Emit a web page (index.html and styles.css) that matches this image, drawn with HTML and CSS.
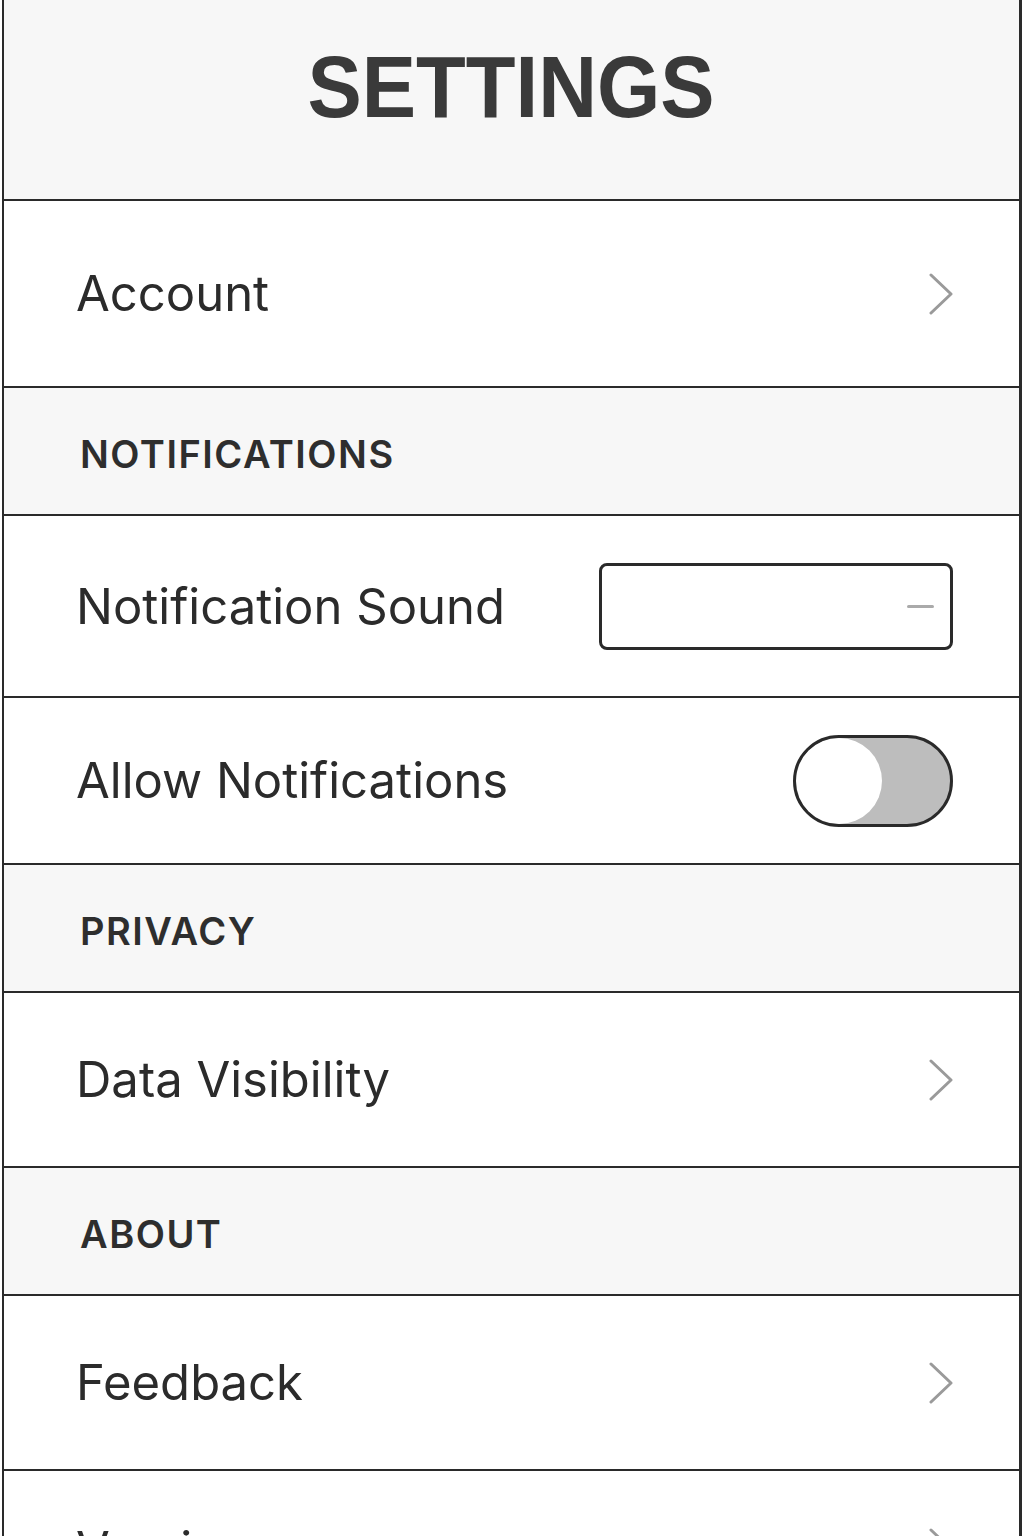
FILE: index.html
```html
<!DOCTYPE html>
<html lang="en">
<head>
<meta charset="utf-8">
<title>Settings</title>
<link rel="stylesheet" href="styles.css">
</head>
<body>
<div class="screen">
  <header class="title-bar"><h1 class="title">SETTINGS</h1></header>

  <div class="row row--185"><span class="label">Account</span>
    <svg class="chevron" viewBox="0 0 24 42"><path d="M2 2 L22 21 L2 40"/></svg>
  </div>

  <div class="section"><span class="section-label">NOTIFICATIONS</span></div>

  <div class="row row--180"><span class="label">Notification Sound</span>
    <div class="select"><span class="select-dash"></span></div>
  </div>

  <div class="row row--165"><span class="label">Allow Notifications</span>
    <div class="toggle"><span class="knob"></span></div>
  </div>

  <div class="section"><span class="section-label">PRIVACY</span></div>

  <div class="row row--173"><span class="label">Data Visibility</span>
    <svg class="chevron" viewBox="0 0 24 42"><path d="M2 2 L22 21 L2 40"/></svg>
  </div>

  <div class="section"><span class="section-label">ABOUT</span></div>

  <div class="row row--173"><span class="label">Feedback</span>
    <svg class="chevron" viewBox="0 0 24 42"><path d="M2 2 L22 21 L2 40"/></svg>
  </div>

  <div class="row row--156"><span class="label">Version</span>
    <svg class="chevron" viewBox="0 0 24 42"><path d="M2 2 L22 21 L2 40"/></svg>
  </div>
</div>
</body>
</html>
```

FILE: styles.css
```css
html, body {
  margin: 0;
  padding: 0;
  background: #ffffff;
}

body {
  font-family: Inter, "Noto Sans", sans-serif;
  color: #2b2b2b;
}

.screen {
  margin-left: 2px;
  width: 1015px;
  border-left: 2px solid #2a2a2a;
  border-right: 3px solid #2a2a2a;
  min-height: 1600px;
}

.title-bar {
  height: 201px;
  box-sizing: border-box;
  background: #f7f7f7;
  border-bottom: 2px solid #2a2a2a;
  display: flex;
  align-items: center;
  justify-content: center;
  padding-bottom: 26px;
}

.title {
  margin: 0;
  font-family: "Liberation Sans", Arial, sans-serif;
  font-weight: 700;
  font-size: 88px;
  letter-spacing: 0;
  color: #3a3a3a;
  line-height: 1;
  transform: scaleX(0.925);
}

.row {
  display: flex;
  align-items: center;
  justify-content: space-between;
  padding: 0 66px 0 72px;
  border-bottom: 2px solid #2a2a2a;
  background: #ffffff;
}

.row--185 { height: 185px; }
.row--180 { height: 180px; }
.row--165 { height: 165px; }
.row--173 { height: 173px; }
.row--156 { height: 156px; }

.label {
  font-size: 49px;
  font-weight: 400;
  color: #2b2b2b;
  letter-spacing: 0;
}

.section {
  height: 128px;
  box-sizing: border-box;
  background: #f7f7f7;
  border-bottom: 2px solid #2a2a2a;
  display: flex;
  align-items: center;
  padding: 6px 0 0 76px;
}

.section-label {
  font-size: 38px;
  font-weight: 600;
  color: #2e2e2e;
  letter-spacing: 1.5px;
}

.chevron {
  width: 24px;
  height: 42px;
  fill: none;
  stroke: #9a9a9a;
  stroke-width: 3;
  stroke-linecap: round;
  stroke-linejoin: round;
}

.select {
  width: 354px;
  height: 87px;
  box-sizing: border-box;
  border: 3px solid #2a2a2a;
  border-radius: 8px;
  display: flex;
  align-items: center;
  justify-content: flex-end;
  padding-right: 16px;
}

.select-dash {
  width: 27px;
  height: 3px;
  border-radius: 2px;
  background: #aaaaaa;
}

.toggle {
  width: 160px;
  height: 92px;
  box-sizing: border-box;
  border: 3px solid #2a2a2a;
  border-radius: 46px;
  background: #bdbdbd;
  display: flex;
  align-items: center;
  overflow: hidden;
}

.knob {
  width: 86px;
  height: 86px;
  border-radius: 50%;
  background: #ffffff;
}
```
